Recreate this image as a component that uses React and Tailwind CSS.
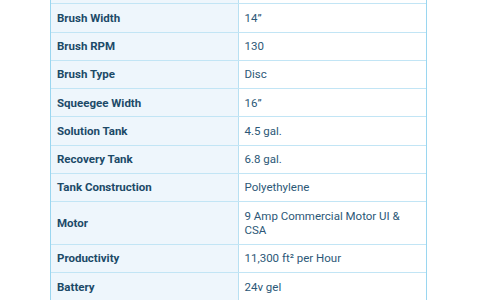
const specs = [
  ["Brush Width", "14\u201D"],
  ["Brush RPM", "130"],
  ["Brush Type", "Disc"],
  ["Squeegee Width", "16\u201D"],
  ["Solution Tank", "4.5 gal."],
  ["Recovery Tank", "6.8 gal."],
  ["Tank Construction", "Polyethylene"],
  ["Motor", "9 Amp Commercial Motor UI & CSA"],
  ["Productivity", "11,300 ft\u00B2 per Hour"],
  ["Battery", "24v gel"],
];

export default function App() {
  return (
    <div
      className="h-[300px] w-[478px] overflow-hidden bg-white"
      style={{ fontFamily: "Roboto, 'Liberation Sans', sans-serif" }}
    >
      <div className="ml-[50px] w-[377px] border-x border-[#9ad6f0]">
        {/* tail of the row above */}
        <div className="grid grid-cols-2 border-b border-[#c2e5f5]">
          <div className="h-[3.3px] border-r border-[#b8e0f2] bg-[#eef6fc]" />
          <div className="h-[3.3px] bg-white" />
        </div>
        {specs.map(([label, value]) => (
          <div
            key={label}
            className="grid grid-cols-2 border-b border-[#c2e5f5] text-[11.5px] leading-[14.4px]"
          >
            <div className="flex items-center border-r border-[#b8e0f2] bg-[#eef6fc] px-[6px] py-[6.45px] font-bold text-[#1c4a68]">
              {label}
            </div>
            <div className="px-[6px] py-[6.45px] text-[#2c5877]">{value}</div>
          </div>
        ))}
      </div>
    </div>
  );
}
